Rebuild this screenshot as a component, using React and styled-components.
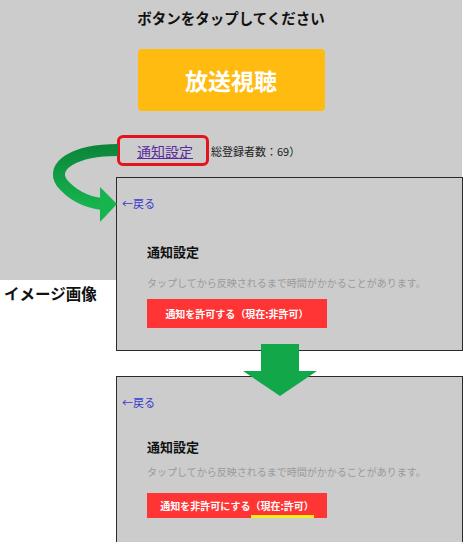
import React from 'react'
import styled, { createGlobalStyle } from 'styled-components'

const GlobalStyle = createGlobalStyle`
  body {
    margin: 0;
    background: #fff;
    font-family: "Noto Sans CJK JP", "Noto Sans", sans-serif;
  }
`

const Page = styled.div`
  position: relative;
  width: 475px;
  height: 542px;
  overflow: hidden;
  background: linear-gradient(#cccccc, #cccccc) no-repeat 0 0 / 462px 280px;
`

const Screen = styled.div`
  width: 462px;
  display: flex;
  flex-direction: column;
  align-items: center;
`

const Heading = styled.h1`
  margin: 8px 0 0;
  font-size: 14.5px;
  line-height: 20px;
  font-weight: 700;
  color: #111;
`

const WatchButton = styled.button`
  margin-top: 21px;
  width: 187px;
  height: 62px;
  border: none;
  border-radius: 4px;
  background: #ffbb0f;
  color: #fff;
  font-family: inherit;
  font-size: 23px;
  font-weight: 700;
  display: flex;
  align-items: center;
  justify-content: center;
`

const LinkRow = styled.div`
  align-self: flex-start;
  margin: 24px 0 0 117px;
  display: flex;
  align-items: center;
`

const Highlight = styled.div`
  box-sizing: border-box;
  width: 92px;
  height: 31px;
  border: 3px solid #e3141d;
  border-radius: 6px;
  display: flex;
  align-items: center;
  padding-left: 17px;
`

const NoticeLink = styled.a`
  color: #5b2b9e;
  font-size: 14px;
  line-height: 1;
  text-decoration: underline;
`

const Count = styled.span`
  margin-left: 2px;
  font-size: 11px;
  color: #222;
`

const Lower = styled.div`
  display: flex;
  margin-top: 11px;
`

const Caption = styled.div`
  width: 116px;
  flex: none;
  box-sizing: border-box;
  padding: 106px 0 0 4px;
  font-size: 15.5px;
  line-height: 20px;
  font-weight: 700;
  color: #111;
  white-space: nowrap;
`

const Panels = styled.div`
  display: flex;
  flex-direction: column;
  gap: 25px;
`

const Panel = styled.section`
  box-sizing: border-box;
  width: 347px;
  min-height: ${p => (p.$compact ? '175px' : '0')};
  border: 1px solid #2a2a2a;
  background: #cccccc;
  padding-bottom: 22px;
`

const BackLink = styled.a`
  display: block;
  margin: 17px 0 0 5px;
  font-size: 11px;
  line-height: 16px;
  color: #3b3bcf;
  text-decoration: none;
`

const PanelBody = styled.div`
  padding-left: 30px;
`

const PanelTitle = styled.h2`
  margin: ${p => (p.$compact ? '28px' : '32px')} 0 0;
  font-size: 13px;
  line-height: 18px;
  font-weight: 700;
  color: #111;
`

const Note = styled.p`
  margin: ${p => (p.$compact ? '9px' : '15px')} 0 0;
  font-size: 10px;
  line-height: 14px;
  color: #9a9a9a;
  white-space: nowrap;
`

const PermitButton = styled.button`
  margin-top: ${p => (p.$compact ? '14px' : '9px')};
  width: 180px;
  height: ${p => (p.$compact ? '25px' : '29px')};
  border: none;
  background: #ff3434;
  color: #fff;
  font-family: inherit;
  font-size: 10px;
  font-weight: 700;
  display: flex;
  align-items: center;
  justify-content: center;
  white-space: nowrap;
  padding: 0;
`

const Marked = styled.span`
  position: relative;
  &::after {
    content: '';
    position: absolute;
    left: 1px;
    right: 0;
    bottom: -5px;
    height: 3px;
    background: #f6ef1a;
  }
`

const CurveArrow = styled.svg`
  position: absolute;
  left: 40px;
  top: 136px;
  width: 80px;
  height: 90px;
  z-index: 2;
`

const DownArrow = styled.svg`
  position: absolute;
  left: 243px;
  top: 344px;
  width: 74px;
  height: 53px;
  z-index: 2;
`

const SettingsPanel = ({ compact, action, current }) => (
  <Panel $compact={compact}>
    <BackLink href="#">←戻る</BackLink>
    <PanelBody>
      <PanelTitle $compact={compact}>通知設定</PanelTitle>
      <Note $compact={compact}>タップしてから反映されるまで時間がかかることがあります。</Note>
      <PermitButton $compact={compact}>
        {action}
        {compact ? <Marked>{current}</Marked> : current}
      </PermitButton>
    </PanelBody>
  </Panel>
)

const App = () => (
  <Page>
    <GlobalStyle />
    <Screen>
      <Heading>ボタンをタップしてください</Heading>
      <WatchButton>放送視聴</WatchButton>
      <LinkRow>
        <Highlight>
          <NoticeLink href="#">通知設定</NoticeLink>
        </Highlight>
        <Count>総登録者数：69）</Count>
      </LinkRow>
    </Screen>
    <Lower>
      <Caption>イメージ画像</Caption>
      <Panels>
        <SettingsPanel action="通知を許可する" current="（現在:非許可）" />
        <SettingsPanel compact action="通知を非許可にする" current="（現在:許可）" />
      </Panels>
    </Lower>

    <CurveArrow viewBox="40 136 80 90">
      <defs>
        <linearGradient id="band" x1="0" y1="145" x2="0" y2="205" gradientUnits="userSpaceOnUse">
          <stop offset="0" stopColor="#0b8539" />
          <stop offset="0.45" stopColor="#0f9a43" />
          <stop offset="1" stopColor="#17b34e" />
        </linearGradient>
      </defs>
      <path
        d="M118 150 C74 150 50 166 62 183 C72 195 86 202 102 204"
        fill="none"
        stroke="url(#band)"
        strokeWidth="12"
      />
      <polygon points="100,187 117,204 100,222" fill="#17b34e" />
    </CurveArrow>

    <DownArrow viewBox="243 344 74 53">
      <rect x="261" y="344" width="38" height="28" fill="#12a84a" />
      <polygon points="243,371 317,371 280,396" fill="#12a84a" />
    </DownArrow>
  </Page>
)

export default App
